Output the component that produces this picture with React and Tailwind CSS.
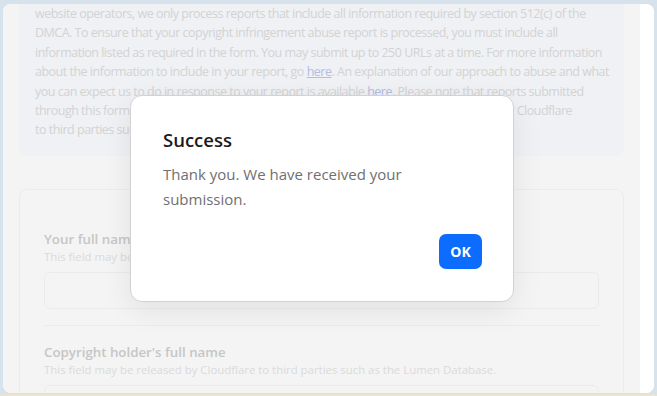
import React from "react"

const font = { fontFamily: '"Open Sans", "Noto Sans", sans-serif' }

const introLines = [
    ["website operators, we only process reports that include all information required by section 512(c) of the"],
    ["DMCA. To ensure that your copyright infringement abuse report is processed, you must include all"],
    ["information listed as required in the form. You may submit up to 250 URLs at a time. For more information"],
    ["about the information to include in your report, go ", "here", ". An explanation of our approach to abuse and what"],
    ["you can expect us to do in response to your report is available ", "here", ". Please note that reports submitted"],
    ["through this form may be forwarded to the website operator and may also be released by Cloudflare"],
    ["to third parties such as the Lumen Database."],
]

function Field({ label, hint }) {
    return (
        <div className="flex flex-col">
            <p className="text-[13.3px] leading-[20px] font-semibold text-[#c6c6c6]">{label}</p>
            <p className="text-[11.4px] leading-[16px] text-[#dadada]">{hint}</p>
            <div className="mt-[7px] h-[37px] rounded-md border border-[#ebebeb]"></div>
        </div>
    )
}

export default function App() {
    return (
        <div className="w-[657px] h-[396px] bg-[#d6e2ec] flex flex-col overflow-hidden" style={font}>
            <div className="flex-1 min-h-0 pt-[4px] pl-[3px] pr-[3px] pb-[1px]">
                <div className="relative h-full flex rounded-lg overflow-hidden bg-white">
                    <main className="flex-1 min-w-0 bg-[#f4f4f4] px-4 overflow-hidden">
                        <section className="-mt-4 pt-4 pb-4 px-4 bg-[#eff1f4] rounded-lg text-[12.5px] leading-[19.4px] tracking-[-0.5px] text-[#d3d3d3]">
                            {introLines.map((line, i) => (
                                <p key={i} className="whitespace-nowrap">
                                    {line.map((part, j) => part === "here"
                                        ? <span key={j} className="underline text-[#b3bce3]">here</span>
                                        : <span key={j}>{part}</span>)}
                                </p>
                            ))}
                        </section>

                        <section className="mt-[33px] rounded-lg border border-[#ececec] px-6 pt-[39px]">
                            <Field label="Your full name" hint="This field may be released by Cloudflare to third parties such as the Lumen Database." />
                            <div className="mt-4 h-px bg-[#ebebeb]"></div>
                            <div className="mt-[16px]">
                                <Field label="Copyright holder's full name" hint="This field may be released by Cloudflare to third parties such as the Lumen Database." />
                            </div>
                        </section>
                    </main>
                    <div className="w-[14px] bg-white"></div>

                    <div className="absolute left-[127px] top-[91px] w-[384px] h-[207px] bg-white rounded-xl border border-[#d2d2d2] shadow-[0_8px_30px_rgba(0,0,0,0.08)] pl-[32px] pr-[31px] pt-[30px] flex flex-col">
                        <h2 className="text-[18.5px] leading-[28px] font-semibold text-[#1b1b1b]">Success</h2>
                        <p className="mt-[8px] text-[15px] leading-[25px] text-[#707070] max-w-[260px]">Thank you. We have received your submission.</p>
                        <div className="mt-auto mb-[32px] flex justify-end">
                            <button className="w-[43px] h-[35px] rounded-[7px] bg-[#0b6cfe] text-white text-[14px] font-bold">OK</button>
                        </div>
                    </div>
                </div>
            </div>
            <div className="h-[2px] bg-[#e9e3cf]"></div>
        </div>
    )
}
